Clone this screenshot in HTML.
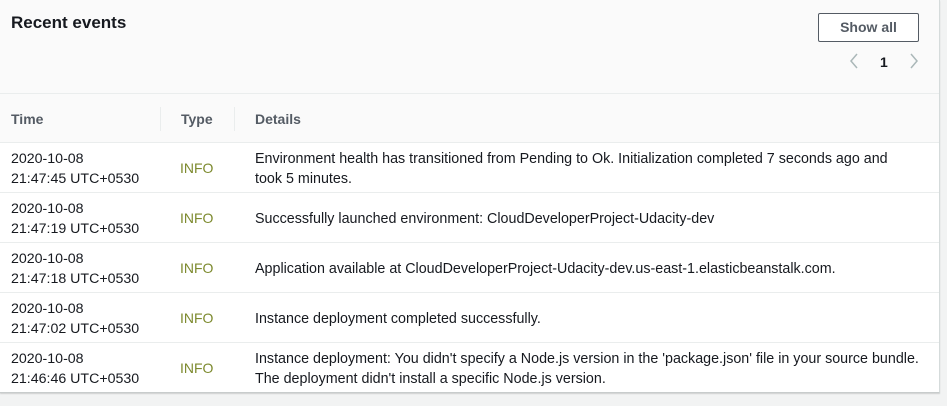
<!DOCTYPE html>
<html><head><style>
body{margin:0;background:#f2f3f3;font-family:"Liberation Sans",sans-serif;color:#16191f;}
.panel{position:absolute;left:0;top:0;width:939px;height:392px;background:#fff;border-right:1px solid #d5dbdb;border-bottom:1px solid #c8cccc;box-shadow:0 1px 1px rgba(0,0,0,.15);}
.head{height:93px;background:#fafafa;border-bottom:1px solid #eaeded;position:relative;}
h2{position:absolute;left:11px;top:13px;margin:0;font-size:17px;font-weight:bold;}
.btn{position:absolute;left:818px;top:13px;width:101px;height:29px;border:1px solid #545b64;border-radius:2px;background:#fff;font-weight:bold;font-size:14px;color:#545b64;text-align:center;line-height:27px;box-sizing:border-box;}
.pg{position:absolute;top:53px;left:848px;font-size:14px;font-weight:bold;color:#16191f;}
.th{height:48px;background:#fafafa;border-bottom:1px solid #eaeded;position:relative;font-weight:bold;color:#545b64;font-size:14px;}
.th span{position:absolute;top:17px;}
.sep{position:absolute;top:13px;width:1px;height:24px;background:#eaeded;}
.row{height:49px;border-bottom:1px solid #eaeded;position:relative;font-size:14px;}
.row:last-child{border-bottom:none}
.t{position:absolute;left:11px;top:6px;line-height:20px;font-size:14.2px;}
.i{position:absolute;left:180px;top:17px;color:#7d8a2e;}
.d{position:absolute;left:255px;top:6px;line-height:20px;width:680px;font-size:14.3px;}
.d1{top:16px}
</style></head><body>
<div class="panel">
<div class="head"><h2>Recent events</h2><div class="btn">Show all</div>
<div class="pg"><svg width="12" height="16" style="position:absolute;left:0;top:0"><path d="M9 1L3 8l6 7" stroke="#aab7b8" stroke-width="1.5" fill="none"/></svg><span style="position:absolute;left:32px;top:1px">1</span><svg width="12" height="16" style="position:absolute;left:60px;top:0"><path d="M3 1l6 7-6 7" stroke="#aab7b8" stroke-width="1.5" fill="none"/></svg></div></div>
<div class="th"><span style="left:11px">Time</span><div class="sep" style="left:160px"></div><span style="left:181px">Type</span><div class="sep" style="left:234px"></div><span style="left:255px">Details</span></div>
<div class="row"><div class="t">2020-10-08<br>21:47:45 UTC+0530</div><div class="i">INFO</div><div class="d">Environment health has transitioned from Pending to Ok. Initialization completed 7 seconds ago and<br>took 5 minutes.</div></div>
<div class="row"><div class="t">2020-10-08<br>21:47:19 UTC+0530</div><div class="i">INFO</div><div class="d d1">Successfully launched environment: CloudDeveloperProject-Udacity-dev</div></div>
<div class="row"><div class="t">2020-10-08<br>21:47:18 UTC+0530</div><div class="i">INFO</div><div class="d d1">Application available at CloudDeveloperProject-Udacity-dev.us-east-1.elasticbeanstalk.com.</div></div>
<div class="row"><div class="t">2020-10-08<br>21:47:02 UTC+0530</div><div class="i">INFO</div><div class="d d1">Instance deployment completed successfully.</div></div>
<div class="row"><div class="t">2020-10-08<br>21:46:46 UTC+0530</div><div class="i">INFO</div><div class="d">Instance deployment: You didn't specify a Node.js version in the 'package.json' file in your source bundle.<br>The deployment didn't install a specific Node.js version.</div></div>
</div>
</body></html>
